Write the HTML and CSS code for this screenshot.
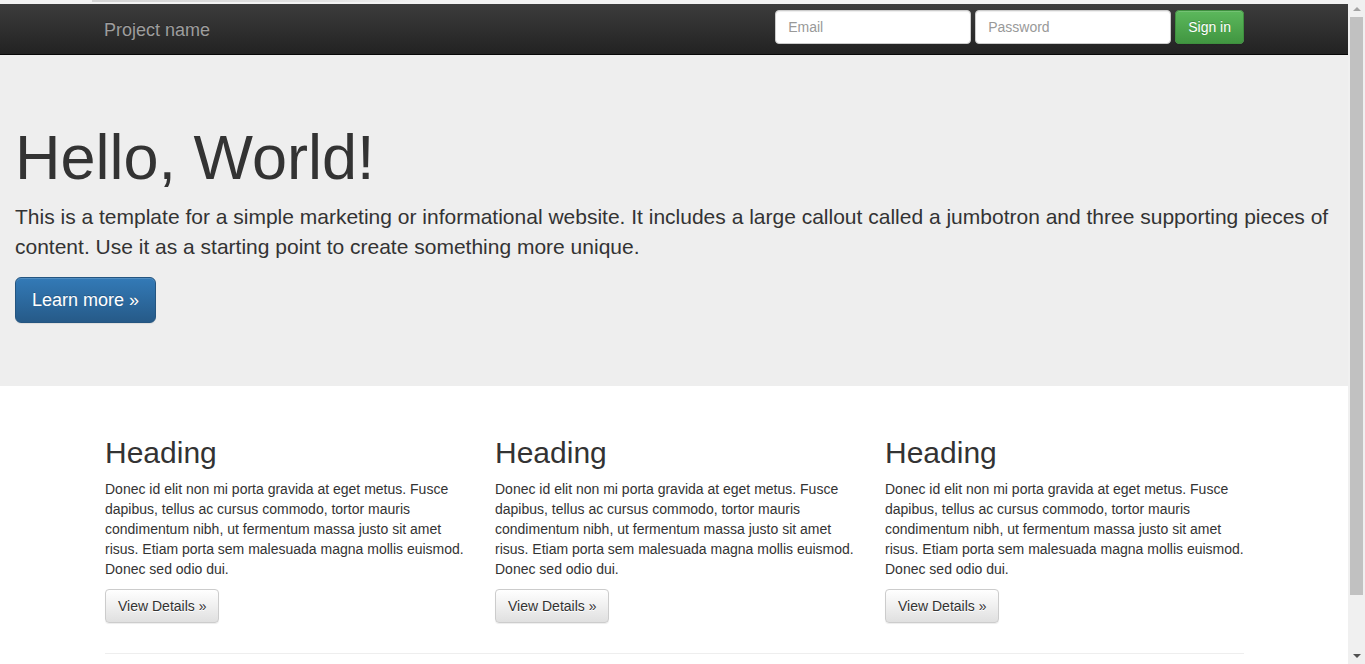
FILE: index.html
```html
<!DOCTYPE html>
<html lang="en">
<head>
<meta charset="utf-8">
<title>Jumbotron Template</title>
<link rel="stylesheet" href="styles.css">
</head>
<body>
<div class="page">
  <div class="topstrip"><span class="topstrip-mark"></span></div>
  <nav class="navbar">
    <div class="container navbar-inner">
      <a class="brand" href="#">Project name</a>
      <form class="signin">
        <input class="form-control" type="text" placeholder="Email">
        <input class="form-control" type="password" placeholder="Password">
        <button class="btn btn-success" type="button">Sign in</button>
      </form>
    </div>
  </nav>

  <div class="jumbotron">
    <h1>Hello, World!</h1>
    <p>This is a template for a simple marketing or informational website. It includes a large callout called a jumbotron and three supporting pieces of content. Use it as a starting point to create something more unique.</p>
    <p><a class="btn btn-primary btn-lg" href="#">Learn more &raquo;</a></p>
  </div>

  <div class="container">
    <div class="row">
      <div class="col">
        <h2>Heading</h2>
        <p>Donec id elit non mi porta gravida at eget metus. Fusce dapibus, tellus ac cursus commodo, tortor mauris condimentum nibh, ut fermentum massa justo sit amet risus. Etiam porta sem malesuada magna mollis euismod. Donec sed odio dui.</p>
        <p><a class="btn btn-default" href="#">View Details &raquo;</a></p>
      </div>
      <div class="col">
        <h2>Heading</h2>
        <p>Donec id elit non mi porta gravida at eget metus. Fusce dapibus, tellus ac cursus commodo, tortor mauris condimentum nibh, ut fermentum massa justo sit amet risus. Etiam porta sem malesuada magna mollis euismod. Donec sed odio dui.</p>
        <p><a class="btn btn-default" href="#">View Details &raquo;</a></p>
      </div>
      <div class="col">
        <h2>Heading</h2>
        <p>Donec id elit non mi porta gravida at eget metus. Fusce dapibus, tellus ac cursus commodo, tortor mauris condimentum nibh, ut fermentum massa justo sit amet risus. Etiam porta sem malesuada magna mollis euismod. Donec sed odio dui.</p>
        <p><a class="btn btn-default" href="#">View Details &raquo;</a></p>
      </div>
    </div>
    <hr class="divider">
  </div>
</div>
<div class="scrollbar">
  <div class="sb-arrow sb-up"></div>
  <div class="sb-track"><div class="sb-thumb"></div></div>
  <div class="sb-arrow sb-down"></div>
</div>
</body>
</html>
```

FILE: styles.css
```css
* { box-sizing: border-box; }

html, body {
  height: 664px;
  overflow: hidden;
}

body {
  margin: 0;
  display: flex;
  font-family: "Liberation Sans", Arial, sans-serif;
  font-size: 14px;
  line-height: 1.42857143;
  color: #333;
  background: #fff;
}

.page {
  flex: 1;
  min-width: 0;
  height: 664px;
  overflow: hidden;
}

.topstrip {
  height: 4px;
  background: #f2f2f2;
  display: flex;
}

.topstrip-mark {
  display: block;
  margin-left: 92px;
  width: 330px;
  height: 2px;
  background: linear-gradient(to right, #d4d4d4, #e2e2e2 70%, #f2f2f2);
}

.container {
  width: 1170px;
  margin: 0 auto;
  padding: 0 15px;
}

.content {
  padding-left: 16px;
}

/* Navbar */
.navbar {
  height: 51px;
  background-image: linear-gradient(to bottom, #3c3c3c 0, #222 100%);
  border-bottom: 1px solid #080808;
}

.navbar-inner {
  height: 50px;
  display: flex;
  justify-content: space-between;
  align-items: flex-start;
}

.brand {
  display: block;
  padding: 16px 0 14px;
  font-size: 18px;
  line-height: 20px;
  color: #9d9d9d;
  text-decoration: none;
  text-shadow: 0 -1px 0 rgba(0,0,0,.25);
}

.signin {
  display: flex;
  gap: 4px;
  margin-top: 6px;
}

.form-control {
  display: block;
  width: 196px;
  height: 34px;
  padding: 6px 12px;
  font-family: inherit;
  font-size: 14px;
  line-height: 20px;
  color: #555;
  background: #fff;
  border: 1px solid #ccc;
  border-radius: 4px;
  box-shadow: inset 0 1px 1px rgba(0,0,0,.075);
  outline: none;
}

.form-control::placeholder { color: #999; }

/* Buttons */
.btn {
  display: inline-block;
  padding: 6px 12px;
  font-family: inherit;
  font-size: 14px;
  line-height: 20px;
  font-weight: normal;
  text-align: center;
  white-space: nowrap;
  text-decoration: none;
  border: 1px solid transparent;
  border-radius: 4px;
  cursor: pointer;
  box-shadow: inset 0 1px 0 rgba(255,255,255,.15), 0 1px 1px rgba(0,0,0,.075);
}

.btn-success {
  color: #fff;
  height: 34px;
  background-image: linear-gradient(to bottom, #5cb85c 0, #419641 100%);
  border-color: #3e8f3e;
  text-shadow: 0 -1px 0 rgba(0,0,0,.2);
}

.btn-primary {
  color: #fff;
  background-image: linear-gradient(to bottom, #337ab7 0, #265a88 100%);
  border-color: #245580;
  text-shadow: 0 -1px 0 rgba(0,0,0,.2);
}

.btn-lg {
  padding: 10px 16px;
  font-size: 18px;
  line-height: 24px;
  border-radius: 6px;
}

.btn-default {
  color: #333;
  background-image: linear-gradient(to bottom, #fff 0, #e0e0e0 100%);
  border-color: #ccc;
  text-shadow: 0 1px 0 #fff;
}

/* Jumbotron */
.jumbotron {
  background: #eee;
  padding: 48px 15px 63px;
  margin-bottom: 30px;
}

.jumbotron h1 {
  margin: 20px 0 10px;
  font-size: 63px;
  line-height: 1.1;
  font-weight: normal;
  color: #333;
}

.jumbotron p {
  margin: 0 0 15px;
  font-size: 21px;
  line-height: 30px;
  font-weight: 200;
}

.jumbotron p:last-child { margin-bottom: 0; }

/* Columns */
.row {
  display: grid;
  grid-template-columns: repeat(3, 1fr);
  margin: 0 -15px;
}

.col {
  padding: 0 14px 0 16px;
}

.col h2 {
  margin: 20px 0 10px;
  font-size: 30px;
  line-height: 1.1;
  font-weight: normal;
  color: #333;
}

.col p {
  margin: 0 0 10px;
}

.divider {
  margin: 20px 0 20px 1px;
  border: 0;
  border-top: 1px solid #eee;
}

/* Fake scrollbar */
.scrollbar {
  width: 17px;
  height: 664px;
  background: #f0f0f0;
  display: flex;
  flex-direction: column;
  flex-shrink: 0;
}

.sb-arrow {
  height: 17px;
  display: flex;
  align-items: center;
  justify-content: center;
}

.sb-up::before {
  content: "";
  border-left: 4px solid transparent;
  border-right: 4px solid transparent;
  border-bottom: 4px solid #a3a3a3;
}

.sb-down::before {
  content: "";
  border-left: 4px solid transparent;
  border-right: 4px solid transparent;
  border-top: 4px solid #505050;
}

.sb-track {
  flex: 1;
  padding: 0 2px;
}

.sb-thumb {
  height: 578px;
  background: #c1c1c1;
}
```
